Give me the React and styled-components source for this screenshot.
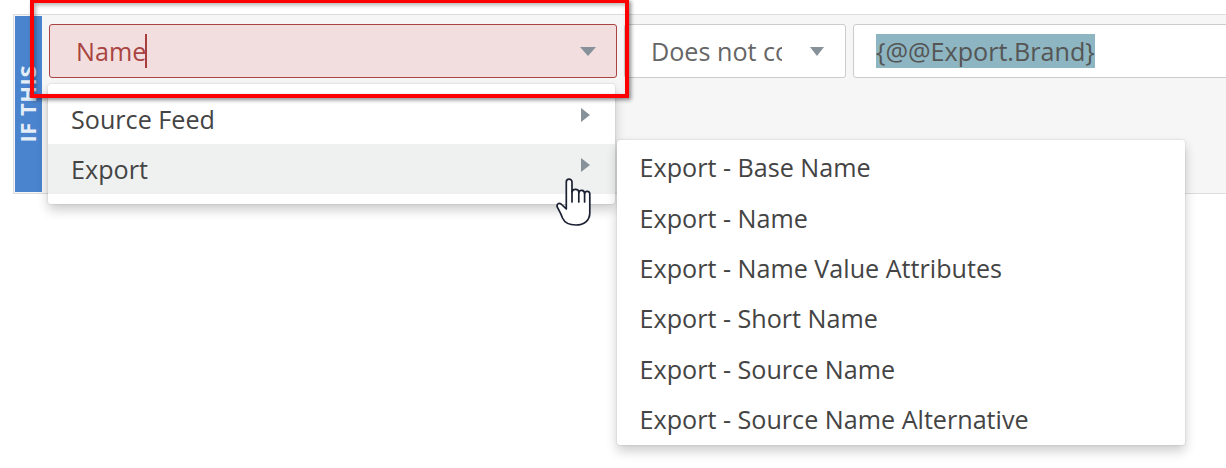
import React from "react";
import styled, { createGlobalStyle } from "styled-components";

const Global = createGlobalStyle`
  html, body { margin: 0; padding: 0; background: #fff; overflow: hidden; }
  #root { width: 1226px; height: 468px; overflow: hidden; position: relative; font-family: "Open Sans", "Liberation Sans", sans-serif; }
`;

const Page = styled.div`
  position: relative;
  width: 1226px;
  height: 468px;
  padding: 14px 0 0 13px;
  box-sizing: border-box;
  overflow: hidden;
`;

const Panel = styled.section`
  display: flex;
  width: 1300px;
  height: 180px;
  box-sizing: border-box;
  padding: 1px;
  background: #f6f6f6;
  border: 1px solid #dcdcdc;
`;

const SideTab = styled.div`
  flex: 0 0 27px;
  display: flex;
  align-items: center;
  justify-content: flex-start;
  background: #4a84ce;
`;

const SideLabel = styled.span`
  writing-mode: vertical-rl;
  transform: rotate(180deg);
  color: #e6eef8;
  font-size: 22px;
  font-weight: 700;
  letter-spacing: 0.5px;
  line-height: 25px;
`;

const Row = styled.div`
  flex: 1;
  display: flex;
  align-items: flex-start;
  gap: 7px;
  padding: 8px 0 0 7px;
`;

const Field = styled.div`
  position: relative;
  flex: ${(p) => p.$flex};
  display: flex;
  align-items: center;
  height: 54px;
  box-sizing: border-box;
  border: 1px solid ${(p) => (p.$error ? "#a94442" : "#cccccc")};
  border-radius: 3px;
  background: ${(p) => (p.$error ? "#f2dede" : "#ffffff")};
  color: ${(p) => (p.$error ? "#a94442" : "#666666")};
  font-size: 25.15px;
  padding-left: ${(p) => p.$pad}px;
`;

const Caret = styled.span`
  display: inline-block;
  width: 2px;
  height: 34px;
  margin-left: -1px;
  background: #a83d3b;
`;

const Clip = styled.span`
  display: block;
  width: 131px;
  overflow: hidden;
  white-space: nowrap;
`;

const Highlight = styled.span`
  background: #8db5c2;
  color: #555555;
  line-height: 34px;
  display: inline-block;
`;

const DownArrow = styled.i`
  position: absolute;
  right: ${(p) => p.$right}px;
  top: 22px;
  width: 0;
  height: 0;
  border-left: ${(p) => p.$half}px solid transparent;
  border-right: ${(p) => p.$half}px solid transparent;
  border-top: 9px solid #87919a;
`;

const Menu = styled.ul`
  position: absolute;
  left: ${(p) => p.$left}px;
  top: ${(p) => p.$top}px;
  width: ${(p) => p.$width}px;
  height: ${(p) => p.$height}px;
  margin: 0;
  padding: ${(p) => p.$padTop}px 0 0;
  box-sizing: border-box;
  list-style: none;
  background: #fff;
  border-radius: 3px;
  box-shadow: 0 0 2px rgba(0, 0, 0, 0.18), 0 6px 12px rgba(0, 0, 0, 0.2);
  overflow: hidden;
`;

const Item = styled.li`
  position: relative;
  height: ${(p) => p.$h}px;
  display: flex;
  align-items: center;
  box-sizing: border-box;
  padding-left: ${(p) => p.$pad}px;
  color: #444444;
  font-size: 25.15px;
  white-space: nowrap;
  background: ${(p) => (p.$active ? "#eff1f1" : "transparent")};
`;

const RightArrow = styled.i`
  position: absolute;
  left: 533px;
  top: 14px;
  width: 0;
  height: 0;
  border-top: 7px solid transparent;
  border-bottom: 7px solid transparent;
  border-left: 9px solid #87919a;
`;

const Annotation = styled.div`
  position: absolute;
  left: 30px;
  top: -1px;
  width: 599px;
  height: 99px;
  box-sizing: border-box;
  border: 4px solid #fe0000;
  box-shadow: 2px 2px 4px rgba(0, 0, 0, 0.45), inset 2px 2px 4px rgba(0, 0, 0, 0.3);
`;

const Pointer = styled.svg`
  position: absolute;
  left: 556px;
  top: 178px;
  width: 36px;
  height: 49px;
`;

const subItems = [
  "Export - Base Name",
  "Export - Name",
  "Export - Name Value Attributes",
  "Export - Short Name",
  "Export - Source Name",
  "Export - Source Name Alternative",
];

export default function App() {
  return (
    <Page>
      <Global />
      <Panel>
        <SideTab>
          <SideLabel>IF THIS</SideLabel>
        </SideTab>
        <Row>
          <Field $flex="0 0 568px" $error $pad={26}>
            Name
            <Caret />
            <DownArrow $right={20} $half={8} />
          </Field>
          <Field $flex="0 0 222px" $pad={26}>
            <Clip>Does not contain</Clip>
            <DownArrow $right={21} $half={7} />
          </Field>
          <Field $flex="1" $pad={22}>
            <Highlight>{"{@@Export.Brand}"}</Highlight>
          </Field>
        </Row>
      </Panel>

      <Menu $left={48} $top={84} $width={567} $height={120} $padTop={10}>
        <Item $h={50} $pad={23}>
          Source Feed
          <RightArrow />
        </Item>
        <Item $h={50} $pad={23} $active>
          Export
          <RightArrow />
        </Item>
      </Menu>

      <Menu $left={617} $top={140} $width={568} $height={305} $padTop={2}>
        {subItems.map((s) => (
          <Item key={s} $h={50.4} $pad={22.5}>
            {s}
          </Item>
        ))}
      </Menu>

      <Annotation />

      <Pointer viewBox="0 0 36 49" fill="none">
        <path
          d="M10.3 31 L5 26 C3 24.5 .8 26 1 28 C1.3 30 4 33 6.5 40 C8.5 44.5 14 47 20 47 C28 47 33.8 42.5 33.8 35 L33.8 16 C33.8 12.5 29 12.5 28.6 15.5 C28.4 11.5 23.4 11.5 23 14.5 C22.6 10.5 16.6 10.5 16 14 L16 4 C16 .2 10.3 .2 10.3 4 Z"
          fill="#fff"
          stroke="#1b2133"
          strokeWidth="1.7"
          strokeLinejoin="round"
        />
        <path d="M16 13 V24 M22.8 14 V24 M28.6 15 V24" stroke="#1b2133" strokeWidth="1.7" strokeLinecap="round" />
      </Pointer>
    </Page>
  );
}
